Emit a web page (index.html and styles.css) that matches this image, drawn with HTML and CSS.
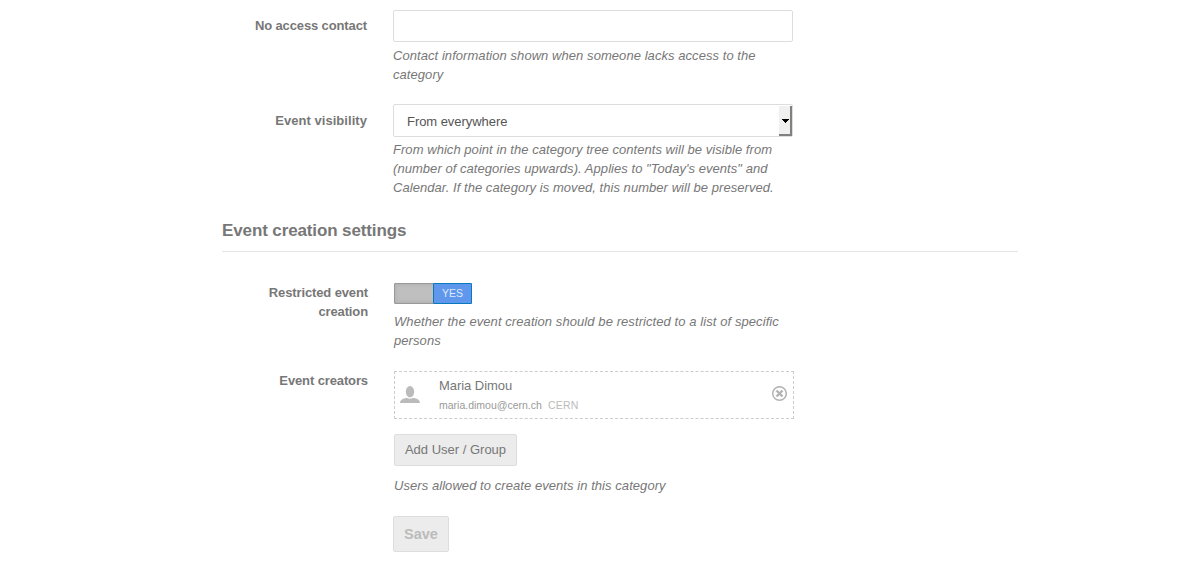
FILE: index.html
```html
<!DOCTYPE html>
<html lang="en">
<head>
<meta charset="utf-8">
<title>Category settings</title>
<link rel="stylesheet" href="styles.css">
</head>
<body>
<form class="settings">
  <div class="row contact">
    <label class="label">No access contact</label>
    <div class="field">
      <div class="input"></div>
      <p class="help">Contact information shown when someone lacks access to the<br>category</p>
    </div>
  </div>
  <div class="row visibility">
    <label class="label">Event visibility</label>
    <div class="field">
      <div class="input select"><span>From everywhere</span><i class="drop"><svg width="7" height="4" viewBox="0 0 7 4"><path d="M0 0h7v1H6v1H5v1H4v1H3V3H2V2H1V1H0z"/></svg></i></div>
      <p class="help">From which point in the category tree contents will be visible from<br>(number of categories upwards). Applies to "Today's events" and<br>Calendar. If the category is moved, this number will be preserved.</p>
    </div>
  </div>
  <h2 class="heading">Event creation settings</h2>
  <div class="row nested restricted">
    <label class="label">Restricted event<br>creation</label>
    <div class="field">
      <div class="switch"><span class="yes">YES</span></div>
      <p class="help">Whether the event creation should be restricted to a list of specific<br>persons</p>
    </div>
  </div>
  <div class="row nested creators">
    <label class="label">Event creators</label>
    <div class="field">
      <div class="person">
        <svg class="avatar" width="20" height="18" viewBox="0 0 20 18"><ellipse cx="10" cy="5.700" rx="4.200" ry="5.700"/><path d="M0 17c.2-3.200 2.500-4.300 6.800-5.300 2 1.500 4.400 1.500 6.400 0 4.300 1 6.600 2.100 6.800 5.300z"/></svg>
        <div class="who"><div class="name">Maria Dimou</div><div class="mail">maria.dimou@cern.ch<span>CERN</span></div></div>
        <svg class="remove" width="16" height="16" viewBox="0 0 16 16"><circle cx="8.500" cy="7.500" r="6.800"/><path class="cross" d="M5.500 4.500l6 6M11.500 4.500l-6 6"/></svg>
      </div>
      <button type="button" class="add">Add User / Group</button>
      <p class="help">Users allowed to create events in this category</p>
    </div>
  </div>
  <button type="button" class="save">Save</button>
</form>
</body>
</html>
```
FILE: styles.css
```css
* { box-sizing: border-box; }
body { margin: 0; background: #fff; color: #777; font: 13px/19px "Liberation Sans", Arial, sans-serif; }
.settings { width: 796px; margin-left: 222px; padding-top: 10px; }
.row { display: flex; }
.nested { padding-left: 1px; }
.label { width: 145px; margin-right: 26px; padding-top: 6px; text-align: right; font-weight: bold; letter-spacing: -0.12px; }
.field { width: 400px; }
.help { margin: 0; font-style: italic; white-space: nowrap; letter-spacing: 0.06px; }
.visibility .help { letter-spacing: 0.05px; }
.restricted .help { letter-spacing: 0.08px; }
.input { height: 32px; border: 1px solid #ddd; border-radius: 2px; margin-bottom: 4px; }
.contact { height: 94px; }
.visibility { height: 116px; }
.visibility .label { padding-top: 7px; letter-spacing: 0.05px; }
.select { height: 33px; margin-bottom: 3px; display: flex; justify-content: space-between; padding-left: 13px; color: #555; line-height: 33px; letter-spacing: -0.05px; }
.drop { width: 13px; margin-top: 1px; height: 30px; display: flex; align-items: center; justify-content: center; padding: 2px 0 0 1px; background: #f0f0ef; border-right: 2px solid #808080; border-bottom: 2px solid #808080; color: #000; }
.heading { margin: 0; padding-top: 1px; height: 32px; border-bottom: 1px solid #e5e5e5; font-size: 17px; line-height: 20px; letter-spacing: -0.12px; }
.restricted { height: 119px; padding-top: 31px; }
.restricted .label, .creators .label { padding-top: 0; }
.switch { width: 78px; height: 21px; margin-bottom: 8px; background: #bfbfbf; border: 1px solid #999; border-radius: 1px; box-shadow: inset 0 0 4px #aaa; display: flex; justify-content: flex-end; }
.yes { width: 39px; height: 21px; margin: -1px; background: #5e97ec; border: 1px solid #0879bd; border-radius: 1px; color: #dfeafb; font-size: 10.5px; line-height: 18px; text-align: center; }
.creators { height: 145px; }
.person { height: 48px; border: 1px dashed #ccc; display: flex; padding: 0 6px 0 5px; }
.avatar { margin-top: 14px; fill: #bbb; }
.who { flex: 1; margin-left: 19px; padding-top: 4px; }
.name { height: 20px; letter-spacing: -0.05px; }
.mail { font-size: 10.5px; color: #999; }
.mail span { color: #bbb; margin-left: 6px; letter-spacing: 0.25px; }
.remove { margin-top: 14px; fill: none; stroke: #b3b3b3; stroke-width: 1.5; }
.cross { stroke-width: 2.4; }
.add { display: block; width: 123px; height: 32px; margin: 15px 0 10px; padding: 0 0 2px; border: 1px solid #ddd; border-radius: 2px; background: #ececec; color: #777; font: inherit; }
.save { display: block; width: 56px; height: 36px; margin-left: 171px; padding: 0 0 1px; border: 1px solid #ddd; border-radius: 2px; background: #ececec; color: #bbb; font: bold 14.5px "Liberation Sans", Arial, sans-serif; }
```
